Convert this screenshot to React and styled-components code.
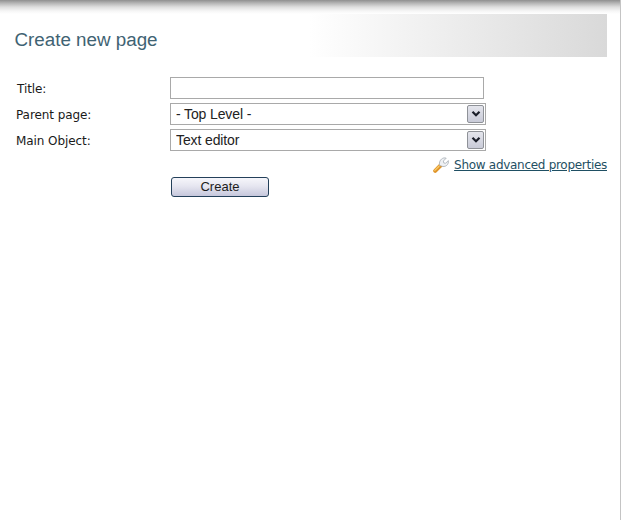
import React from "react";
import styled, { createGlobalStyle } from "styled-components";

const Global = createGlobalStyle`
  html, body { margin: 0; padding: 0; background: #fff; }
  body { font-family: "DejaVu Sans", sans-serif; }
`;

const Page = styled.div`
  width: 621px;
  height: 520px;
  box-sizing: border-box;
  border-right: 1px solid #c4c4c4;
  background: linear-gradient(to bottom, #8f8f8f 0, #b4b4b4 3px, #dedede 7px, #f6f6f6 11px, #fff 14px) no-repeat;
  background-size: 100% 14px;
  padding: 14px 13px 0 0;
  overflow: hidden;
`;

const Header = styled.div`
  height: 43px;
  box-sizing: border-box;
  display: flex;
  align-items: center;
  padding: 9px 0 0 14.5px;
  background: linear-gradient(to right, #fff 0, #fff 51%, #d9d9d9 100%);
`;

const Heading = styled.h1`
  margin: 0;
  font: 400 18.8px/1 "Liberation Sans", Arial, sans-serif;
  color: #3f6373;
`;

const Form = styled.form`
  display: grid;
  grid-template-columns: 170px 316px;
  grid-auto-rows: 22px;
  row-gap: 4px;
  margin-top: 20px;
`;

const Label = styled.label`
  font-size: 12px;
  line-height: 24px;
  color: #1a1a1a;
  padding-left: ${(p) => p.$indent}px;
  letter-spacing: -0.08px;
`;

const TextInput = styled.input`
  width: 314px;
  height: 22px;
  box-sizing: border-box;
  border: 1px solid #a9a9a9;
  background: #fff;
  padding: 0 4px;
  outline: none;
`;

const SelectWrap = styled.div`
  position: relative;
  width: 316px;
  height: 22px;
`;

const Select = styled.select`
  appearance: none;
  width: 100%;
  height: 100%;
  box-sizing: border-box;
  border: 1px solid #a9a9a9;
  border-radius: 0;
  background: #fff;
  padding: 0 0 0 5px;
  font: 400 14px/20px "Liberation Sans", Arial, sans-serif;
  letter-spacing: -0.12px;
  color: #222;
  outline: none;
`;

const ArrowButton = styled.span`
  position: absolute;
  right: 2px;
  top: 2px;
  width: 17px;
  height: 18px;
  box-sizing: border-box;
  border: 1px solid #8f9298;
  border-radius: 2px;
  background: linear-gradient(to bottom, #e4e5ec, #c9cbd8);
  display: flex;
  align-items: center;
  justify-content: center;
  pointer-events: none;
`;

const LinkRow = styled.div`
  display: flex;
  justify-content: flex-end;
  align-items: center;
  gap: 5px;
  height: 20px;
  margin-top: 4px;
`;

const AdvancedLink = styled.a`
  font-size: 12px;
  line-height: 16px;
  color: #1f4f63;
  text-decoration: underline;
  letter-spacing: -0.29px;
`;

const ButtonRow = styled.div`
  padding: 1px 0 0 171px;
`;

const CreateButton = styled.button`
  width: 98px;
  height: 20px;
  box-sizing: border-box;
  padding: 0;
  border: 1px solid #24405a;
  border-radius: 3px;
  background: linear-gradient(to bottom, #f6f6fb 0, #e6e6f0 45%, #c6c7dc 100%);
  font: 400 13px/18px "Liberation Sans", Arial, sans-serif;
  color: #1c1c1c;
`;

const Chevron = () => (
  <svg width="10" height="8" viewBox="0 0 10 8">
    <path d="M1.5 1.8 5 5.3 8.5 1.8" fill="none" stroke="#1b1f2a" strokeWidth="2.2" />
  </svg>
);

const Wrench = () => (
  <svg width="16" height="16" viewBox="0 0 16 16">
    <path d="M2.2 13.8 8 8" stroke="#e0952a" strokeWidth="4" strokeLinecap="round" fill="none" />
    <path d="M1.8 13.4 6 9.2" stroke="#f9cc6a" strokeWidth="1.3" strokeLinecap="round" fill="none" />
    <path
      d="M6.6 8.4C5.8 5.4 7.4 1.8 10.6 1c1-.2 1.9-.1 2.6.2L10.4 4l.3 1.9 1.9.4L15.3 3.6c.4 1.7-.2 3.7-1.6 4.8-1.7 1.3-3.6 1.4-5.2.7Z"
      fill="#eef0f3"
      stroke="#a6adb5"
      strokeWidth="0.8"
    />
  </svg>
);

const SelectField = ({ id, children }) => (
  <SelectWrap>
    <Select id={id}>{children}</Select>
    <ArrowButton>
      <Chevron />
    </ArrowButton>
  </SelectWrap>
);

export default function App() {
  return (
    <Page>
      <Global />
      <Header>
        <Heading>Create new page</Heading>
      </Header>
      <Form>
        <Label $indent={17} htmlFor="title">Title:</Label>
        <TextInput id="title" type="text" />
        <Label $indent={16} htmlFor="parent">Parent page:</Label>
        <SelectField id="parent">
          <option>- Top Level -</option>
        </SelectField>
        <Label $indent={16} htmlFor="object">Main Object:</Label>
        <SelectField id="object">
          <option>Text editor</option>
        </SelectField>
      </Form>
      <LinkRow>
        <Wrench />
        <AdvancedLink href="#">Show advanced properties</AdvancedLink>
      </LinkRow>
      <ButtonRow>
        <CreateButton type="button">Create</CreateButton>
      </ButtonRow>
    </Page>
  );
}
